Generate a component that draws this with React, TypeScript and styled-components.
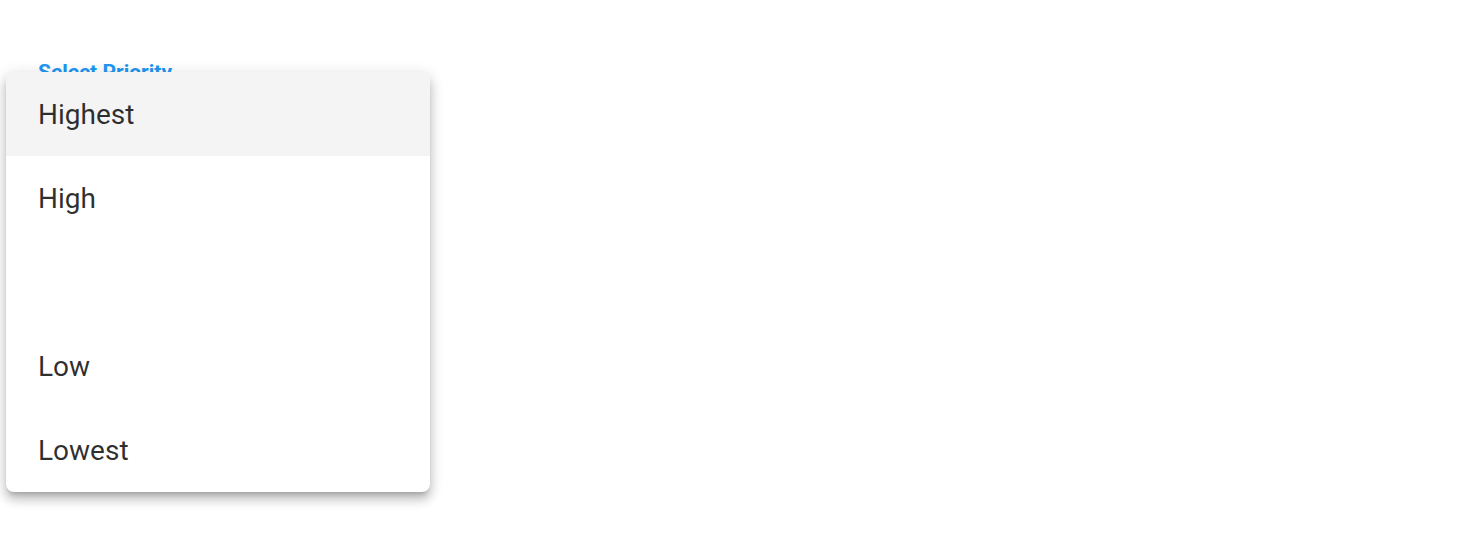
import styled, { createGlobalStyle } from 'styled-components';

const GlobalStyle = createGlobalStyle`
  html, body {
    margin: 0;
    padding: 0;
    background: #ffffff;
  }

  body {
    font-family: Roboto, 'Liberation Sans', sans-serif;
    width: 1484px;
    height: 540px;
    overflow: hidden;
  }
`;

const Page = styled.div`
  position: relative;
  width: 1484px;
  height: 540px;
  padding: 60px 0 0 38px;
  box-sizing: border-box;
`;

const Label = styled.div`
  font-size: 21px;
  font-weight: 700;
  line-height: 24px;
  color: #2196f3;
`;

const Menu = styled.ul`
  position: absolute;
  top: 72px;
  left: 6px;
  width: 424px;
  margin: 0;
  padding: 0;
  list-style: none;
  background: #ffffff;
  border-radius: 8px;
  overflow: hidden;
  box-shadow: 0px 5px 5px -3px rgba(0, 0, 0, 0.2), 0px 8px 10px 1px rgba(0, 0, 0, 0.14),
    0px 3px 14px 2px rgba(0, 0, 0, 0.12);
`;

const Item = styled.li<{ $active?: boolean }>`
  display: flex;
  align-items: center;
  height: 84px;
  padding: 0 32px;
  font-size: 28px;
  font-weight: 400;
  color: rgba(0, 0, 0, 0.82);
  background: ${(p) => (p.$active ? '#f4f4f4' : 'transparent')};
`;

const options = ['Highest', 'High', '', 'Low', 'Lowest'];

function App() {
  return (
    <>
      <GlobalStyle />
      <Page>
        <Label>Select Priority</Label>

        <Menu role='listbox'>
          {options.map((opt, i) => (
            <Item key={i} role='option' $active={i === 0}>
              {opt}
            </Item>
          ))}
        </Menu>
      </Page>
    </>
  );
}

export default App;
